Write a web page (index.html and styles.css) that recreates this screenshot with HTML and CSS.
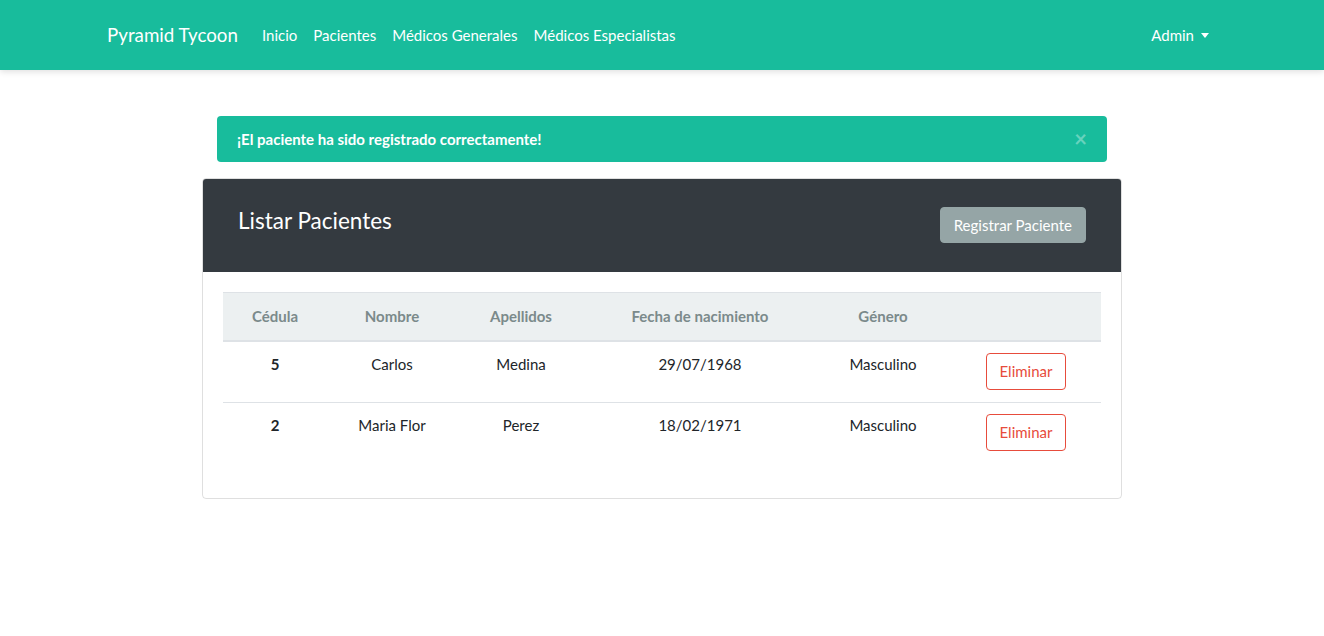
FILE: index.html
```html
<!DOCTYPE html>
<html lang="es">
<head>
<meta charset="utf-8">
<title>Pyramid Tycoon</title>
<link rel="stylesheet" href="styles.css">
</head>
<body>
<nav class="navbar">
  <div class="nav-inner">
    <div class="nav-left">
      <a class="brand" href="#">Pyramid Tycoon</a>
      <a class="nav-link" href="#">Inicio</a>
      <a class="nav-link" href="#">Pacientes</a>
      <a class="nav-link" href="#">Médicos Generales</a>
      <a class="nav-link" href="#">Médicos Especialistas</a>
    </div>
    <a class="nav-link dropdown" href="#">Admin <span class="caret"></span></a>
  </div>
</nav>
<main class="main">
  <div class="alert">
    <span>¡El paciente ha sido registrado correctamente!</span>
    <span class="close">×</span>
  </div>
  <section class="card">
    <header class="card-header">
      <h3 class="card-title">Listar Pacientes</h3>
      <button class="btn btn-secondary">Registrar Paciente</button>
    </header>
    <div class="card-body">
      <table class="table">
        <thead>
          <tr>
            <th class="c1">Cédula</th>
            <th class="c2">Nombre</th>
            <th class="c3">Apellidos</th>
            <th class="c4">Fecha de nacimiento</th>
            <th class="c5">Género</th>
            <th class="c6"></th>
          </tr>
        </thead>
        <tbody>
          <tr>
            <td class="strong">5</td>
            <td>Carlos</td>
            <td>Medina</td>
            <td>29/07/1968</td>
            <td>Masculino</td>
            <td><button class="btn btn-outline-danger">Eliminar</button></td>
          </tr>
          <tr>
            <td class="strong">2</td>
            <td>Maria Flor</td>
            <td>Perez</td>
            <td>18/02/1971</td>
            <td>Masculino</td>
            <td><button class="btn btn-outline-danger">Eliminar</button></td>
          </tr>
        </tbody>
      </table>
    </div>
  </section>
</main>
</body>
</html>
```
FILE: styles.css
```css
* { box-sizing: border-box; }
html, body { margin: 0; padding: 0; }
body {
  font-family: Lato, "Noto Sans", sans-serif;
  font-size: 15px;
  line-height: 1.5;
  color: #212529;
  background: #fff;
}
a { text-decoration: none; }

.navbar {
  background: #18bc9c;
  height: 70px;
  box-shadow: 0 2px 6px rgba(0,0,0,0.12);
  display: flex;
  align-items: center;
}
.nav-inner {
  width: 1140px;
  margin: 0 auto;
  padding: 0 15px;
  display: flex;
  align-items: center;
  justify-content: space-between;
}
.nav-left { display: flex; align-items: center; }
.brand {
  color: #fff;
  font-size: 18.75px;
  line-height: 30px;
  margin-right: 16px;
}
.nav-link {
  color: #fff;
  padding: 8px 8px;
  font-size: 15px;
}
.dropdown { display: flex; align-items: center; }
.caret {
  display: inline-block;
  margin-left: 7px;
  border-top: 5px solid #fff;
  border-left: 4.5px solid transparent;
  border-right: 4.5px solid transparent;
  margin-top: 1px;
}

.main {
  display: flex;
  flex-direction: column;
  align-items: center;
  padding-top: 46px;
}
.alert {
  width: 890px;
  background: #18bc9c;
  color: #fff;
  font-weight: 700;
  border-radius: 4px;
  padding: 12px 20px;
  line-height: 22px;
  display: flex;
  justify-content: space-between;
  align-items: center;
  margin-bottom: 17px;
}
.close {
  font-size: 22px;
  line-height: 22px;
  color: rgba(255,255,255,0.35);
  font-weight: 700;
}
.card {
  width: 920px;
  border: 1px solid rgba(0,0,0,0.125);
  border-radius: 4px;
  overflow: hidden;
  margin-top: -1px;
}
.card-header {
  background: #343a40;
  padding: 28px 35px 29px 35px;
  display: flex;
  justify-content: space-between;
  align-items: flex-start;
}
.card-title {
  margin: 0 0 8px 0;
  color: #fff;
  font-weight: 400;
  font-size: 22.5px;
  line-height: 1.25;
}
.btn {
  font-family: Lato, "Noto Sans", sans-serif;
  font-size: 15px;
  line-height: 22px;
  padding: 6px 13px;
  border-radius: 4px;
  border: 1px solid transparent;
  cursor: pointer;
}
.btn-secondary {
  background: #95a5a6;
  border-color: #95a5a6;
  color: #fff;
}
.btn-outline-danger {
  background: #fff;
  border-color: #e74c3c;
  color: #e74c3c;
  padding: 6px 13px 7px;
}
.card-body { padding: 20px; }
.table {
  width: 100%;
  border-collapse: collapse;
  margin-bottom: 15px;
  table-layout: fixed;
}
.table th, .table td {
  padding: 12px;
  text-align: center;
  vertical-align: top;
  border-top: 1px solid #dee2e6;
}
.table thead th {
  background: #ecf0f1;
  color: #7b8a8b;
  font-weight: 700;
  border-bottom: 2px solid #dee2e6;
}
.table tbody td { padding: 11px 12px 12px; }
.table tbody tr:first-child td { border-top: none; }
.strong { font-weight: 700; }
.c1 { width: 104px; }
.c2 { width: 130px; }
.c3 { width: 128px; }
.c4 { width: 230px; }
.c5 { width: 136px; }
.c6 { width: 150px; }
```
